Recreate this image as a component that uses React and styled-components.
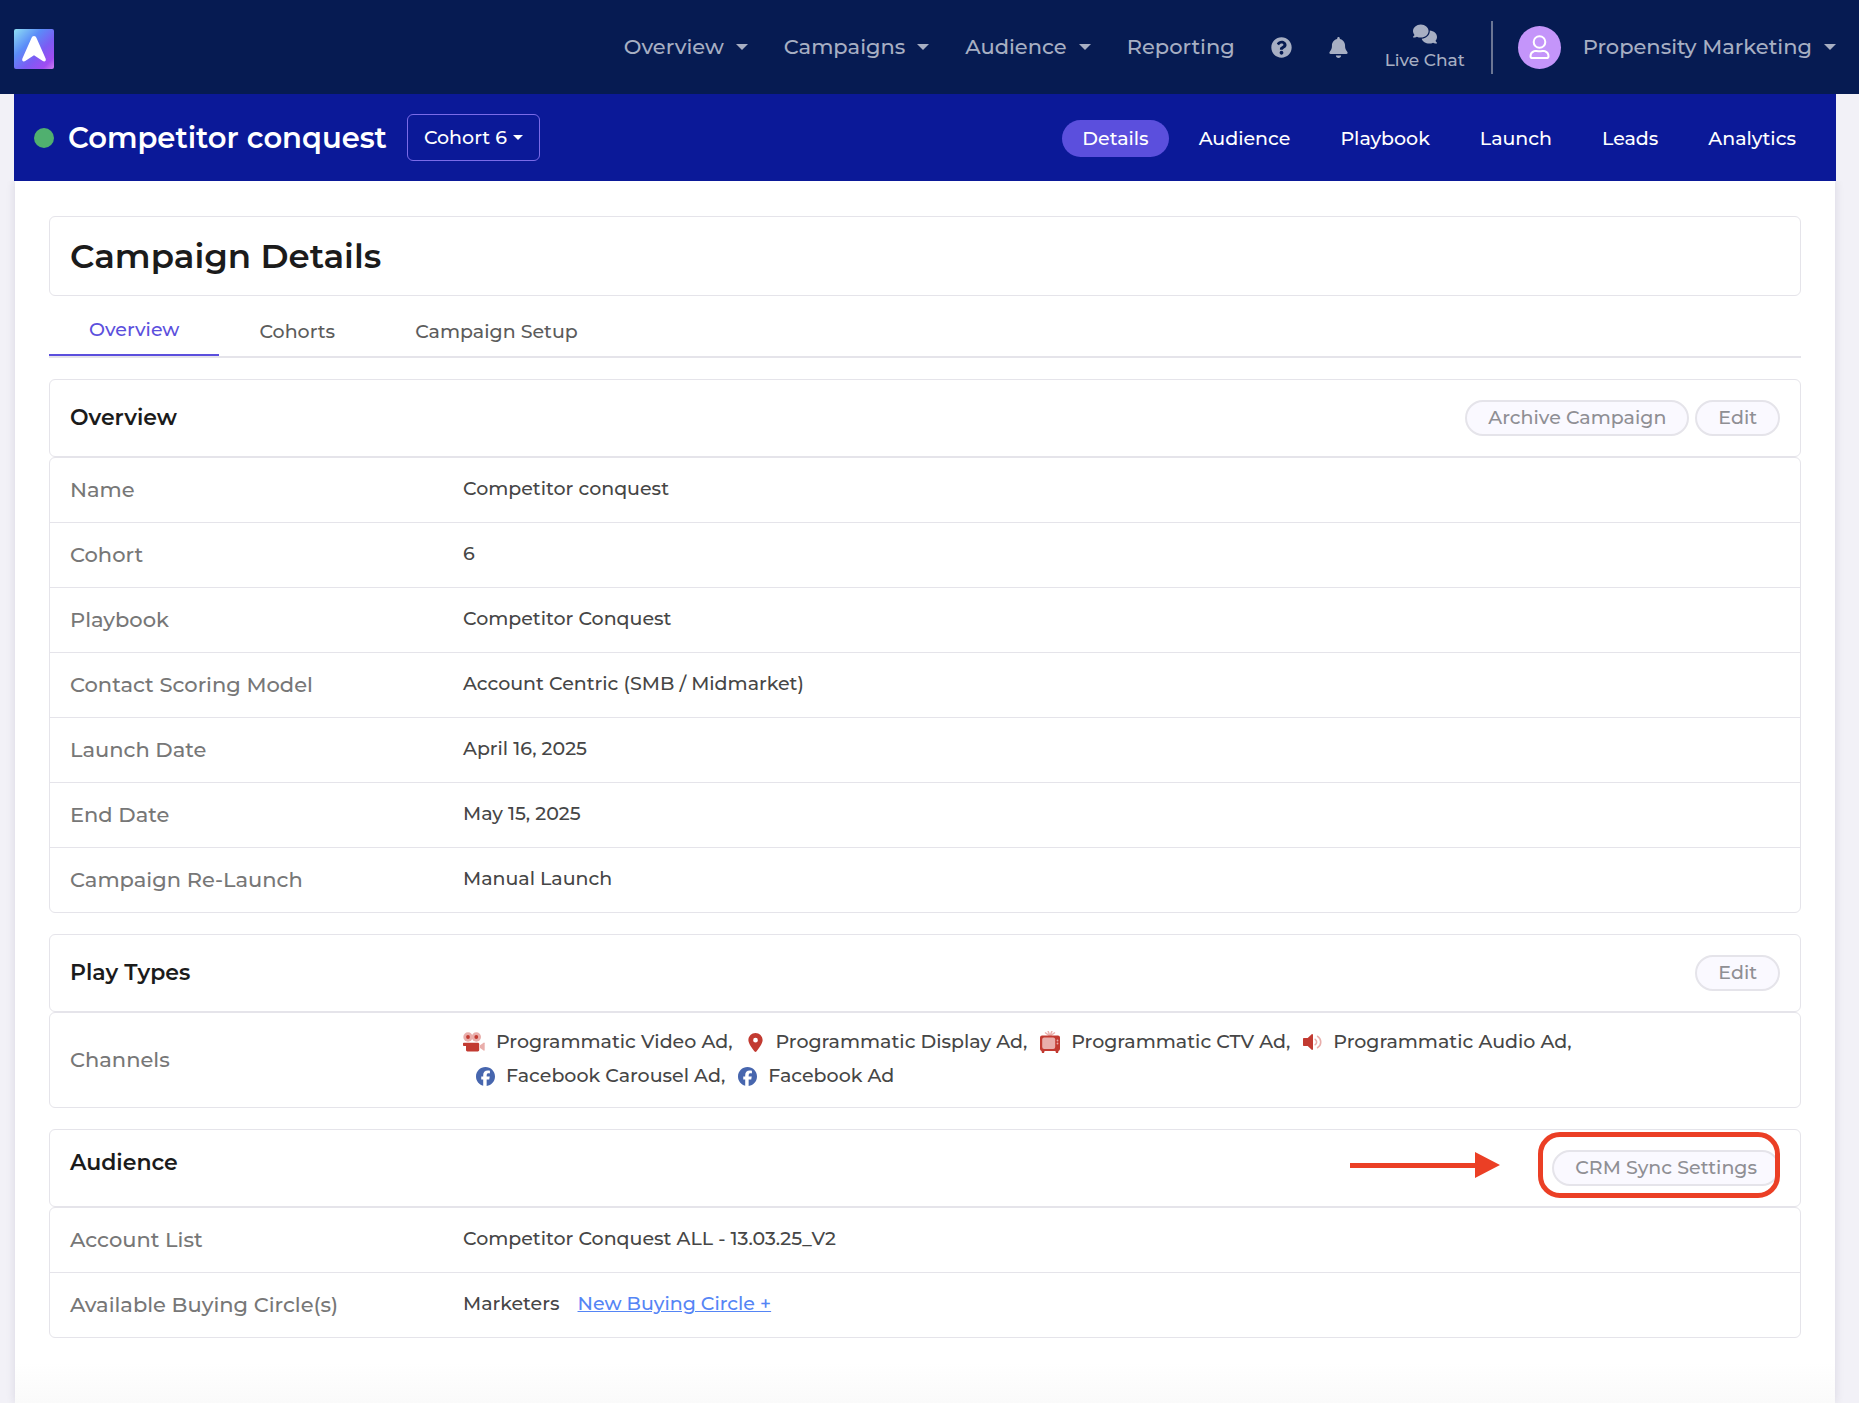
import React from "react";
import styled, { createGlobalStyle } from "styled-components";
import { FaQuestionCircle } from "react-icons/fa";
import { FaBell, FaComments, FaFacebook, FaLocationDot } from "react-icons/fa6";

const overviewRows = [
  { label: "Name", value: "Competitor conquest" },
  { label: "Cohort", value: "6" },
  { label: "Playbook", value: "Competitor Conquest" },
  { label: "Contact Scoring Model", value: "Account Centric (SMB / Midmarket)" },
  { label: "Launch Date", value: "April 16, 2025" },
  { label: "End Date", value: "May 15, 2025" },
  { label: "Campaign Re-Launch", value: "Manual Launch" },
];

const campaignLinks = [
  "Details",
  "Audience",
  "Playbook",
  "Launch",
  "Leads",
  "Analytics",
];

const tabs = ["Overview", "Cohorts", "Campaign Setup"];

const Logo = () => (
  <svg width="40" height="40" viewBox="0 0 40 40" role="img" aria-label="Home">
    <defs>
      <linearGradient id="logo" x1="0" y1="0" x2="1" y2="1">
        <stop offset="0" stopColor="#8fe0f4" />
        <stop offset="0.35" stopColor="#5b8cf8" />
        <stop offset="0.62" stopColor="#7c5cf3" />
        <stop offset="0.85" stopColor="#a04cf2" />
        <stop offset="1" stopColor="#cf7ff0" />
      </linearGradient>
    </defs>
    <rect width="40" height="40" rx="2" fill="url(#logo)" />
    <path
      d="M20 7c1.300 0 2 .8 2.500 2l9.100 20.500c.9 2.200-.9 3.900-2.800 2.600L20 26.200l-8.800 5.900c-1.900 1.300-3.700-.4-2.800-2.600L17.500 9c.5-1.200 1.200-2 2.500-2z"
      fill="#fff"
    />
  </svg>
);

const PersonIcon = () => (
  <svg width="21" height="25" viewBox="0 0 21 25" fill="none" aria-hidden="true">
    <g stroke="#fff" strokeWidth="2">
      <circle cx="10.500" cy="7" r="5.800" />
      <path d="M5 16.200c1.500-.8 2.300 0 5.500 0s4-.8 5.500 0c2.300.9 3.500 2.700 3.500 5 0 1-.7 1.800-1.700 1.800H3.200c-1 0-1.700-.8-1.700-1.800 0-2.300 1.200-4.100 3.500-5z" />
    </g>
  </svg>
);

const VideoIcon = () => (
  <svg width="22" height="20" viewBox="0 0 22 20" aria-hidden="true">
    <g fill="#e9aeab">
      <circle cx="5" cy="5" r="4.700" />
      <circle cx="13.300" cy="5" r="4.700" />
      <path d="M17 13.200l3.600-2.500c.6-.4 1.100-.1 1.100.5v6.800c0 .6-.5.900-1.100.5L17 16z" />
    </g>
    <g fill="#c23a31">
      <circle cx="5" cy="5" r="1.900" />
      <circle cx="13.300" cy="5" r="1.900" />
      <path d="M.8 10.700h14c.8 0 1.400.6 1.400 1.400v5.900c0 .8-.6 1.400-1.400 1.400H4.400c-.8 0-1.400-.6-1.400-1.400v-4H.8c-.5 0-.8-.3-.8-.8v-1.700c0-.5.3-.8.8-.8z" />
    </g>
  </svg>
);

const TvIcon = () => (
  <svg width="20" height="22" viewBox="0 0 20 22" aria-hidden="true">
    <path
      d="M5 1.500l5 3.500 5-3.500M8 0l2 5 2-5"
      stroke="#e9aeab"
      strokeWidth="1.500"
      fill="none"
    />
    <path
      d="M2 4.500h16a2 2 0 0 1 2 2V18a2 2 0 0 1-1.500 1.900L18 22h-2l-.6-2H4.600L4 22H2l-.5-2.100A2 2 0 0 1 0 18V6.500a2 2 0 0 1 2-2z"
      fill="#c23a31"
    />
    <rect x="2.200" y="6.500" width="13" height="11.500" rx="2" fill="#e9aeab" />
    <circle cx="17.500" cy="9.500" r="0.900" fill="#e9aeab" />
    <circle cx="17.500" cy="12.500" r="0.900" fill="#e9aeab" />
  </svg>
);

const AudioIcon = () => (
  <svg width="19" height="20" viewBox="0 0 19 20" aria-hidden="true">
    <path
      d="M10 3v14c0 .8-.8 1.100-1.300.7L4.700 14H1c-.6 0-1-.4-1-1V7c0-.6.4-1 1-1h3.700l4-3.700c.5-.4 1.300-.1 1.300.7z"
      fill="#c23a31"
    />
    <path
      d="M12.200 7.300c1.900 1.300 1.900 4.100 0 5.400M14.600 4.300c4.200 2.700 4.200 8.700 0 11.400"
      stroke="#e9aeab"
      strokeWidth="1.600"
      strokeLinecap="round"
      fill="none"
    />
  </svg>
);

const Arrow = () => (
  <ArrowSvg viewBox="0 0 150 26" aria-hidden="true">
    <path d="M0 11h125V0l25 13-25 13V16H0z" fill="#eb3f25" />
  </ArrowSvg>
);

const channels = [
  { label: "Programmatic Video Ad", icon: <VideoIcon /> },
  {
    label: "Programmatic Display Ad",
    icon: <FaLocationDot width={15} height={20} color="#c23a31" />,
  },
  { label: "Programmatic CTV Ad", icon: <TvIcon /> },
  { label: "Programmatic Audio Ad", icon: <AudioIcon /> },
  { label: "Facebook Carousel Ad", icon: <FaFacebook size={19} color="#4766ae" /> },
  { label: "Facebook Ad", icon: <FaFacebook size={19} color="#4766ae" /> },
];

const Rows = ({ items }) => (
  <RowList>
    {items.map(({ label, value }) => (
      <Row key={label}>
        <dt>{label}</dt>
        <dd>{value}</dd>
      </Row>
    ))}
  </RowList>
);

export default function App() {
  return (
    <>
      <GlobalStyle />
      <TopBar>
        <LogoLink href="#home">
          <Logo />
        </LogoLink>
        <MainNav>
          {["Overview", "Campaigns", "Audience"].map((label) => (
            <NavButton key={label} type="button">
              {label}
              <Caret />
            </NavButton>
          ))}
          <NavLink href="#reporting">Reporting</NavLink>
          <NavLink href="#help" aria-label="Help">
            <FaQuestionCircle size={21} />
          </NavLink>
          <NavLink href="#notifications" aria-label="Notifications">
            <FaBell size={21} />
          </NavLink>
          <ChatLink href="#chat">
            <FaComments size={24} />
            Live Chat
          </ChatLink>
        </MainNav>
        <Account type="button">
          <Avatar>
            <PersonIcon />
          </Avatar>
          <AccountName>
            Propensity Marketing
            <Caret />
          </AccountName>
        </Account>
      </TopBar>
      <Page>
        <CampaignBar>
          <StatusDot />
          <CampaignName>Competitor conquest</CampaignName>
          <CohortButton type="button">
            Cohort 6
            <Caret $small />
          </CohortButton>
          <CampaignNav>
            {campaignLinks.map((label) => (
              <CampaignLink
                key={label}
                href={`#${label.toLowerCase()}`}
                $active={label === "Details"}
              >
                {label}
              </CampaignLink>
            ))}
          </CampaignNav>
        </CampaignBar>
        <Content>
          <TitleBox>
            <h1>Campaign Details</h1>
          </TitleBox>
          <Tabs role="tablist">
            {tabs.map((label, i) => (
              <Tab key={label} type="button" role="tab" aria-selected={i === 0}>
                {label}
              </Tab>
            ))}
          </Tabs>

          <Section>
            <SectionHeader>
              <h2>Overview</h2>
              <Actions>
                <PillButton type="button">Archive Campaign</PillButton>
                <PillButton type="button">Edit</PillButton>
              </Actions>
            </SectionHeader>
            <Rows items={overviewRows} />
          </Section>

          <Section>
            <SectionHeader>
              <h2>Play Types</h2>
              <Actions>
                <PillButton type="button">Edit</PillButton>
              </Actions>
            </SectionHeader>
            <Rows
              items={[
                {
                  label: "Channels",
                  value: (
                    <Channels>
                      {channels.map(({ label, icon }, i) => (
                        <Channel key={label}>
                          {icon}
                          {label}
                          {i < channels.length - 1 && ","}
                        </Channel>
                      ))}
                    </Channels>
                  ),
                },
              ]}
            />
          </Section>

          <Section>
            <SectionHeader $top>
              <h2>Audience</h2>
              <Actions>
                <PillButton type="button">CRM Sync Settings</PillButton>
                <Highlight />
                <Arrow />
              </Actions>
            </SectionHeader>
            <Rows
              items={[
                {
                  label: "Account List",
                  value: "Competitor Conquest ALL - 13.03.25_V2",
                },
                {
                  label: "Available Buying Circle(s)",
                  value: (
                    <>
                      Marketers
                      <TextLink href="#new-buying-circle">New Buying Circle +</TextLink>
                    </>
                  ),
                },
              ]}
            />
          </Section>
        </Content>
      </Page>
    </>
  );
}

const line = "#e5e4ea";

const GlobalStyle = createGlobalStyle`
  *, *::before, *::after {
    box-sizing: border-box;
  }
  body {
    margin: 0;
    background: #f2f1f7;
    color: #464646;
    font-family: Montserrat, Inter, sans-serif;
    font-size: 19px;
    font-weight: 500;
    line-height: 24px;
  }
  #root {
    display: flex;
    flex-direction: column;
    min-height: 100vh;
  }
  button {
    padding: 0;
    border: 0;
    background: none;
    color: inherit;
    font: inherit;
    cursor: pointer;
  }
  a {
    color: inherit;
    text-decoration: none;
  }
  h1, h2, dl, dd {
    margin: 0;
  }
  svg {
    flex-shrink: 0;
  }
`;

const TopBar = styled.header`
  display: flex;
  align-items: center;
  height: 94px;
  padding: 0 23px 0 14px;
  background: #061b52;
  color: #a7afc3;
  font-size: 21px;
`;

const LogoLink = styled.a`
  display: flex;
  margin-top: 4px;
`;

const MainNav = styled.nav`
  display: flex;
  align-items: center;
  gap: 36px;
  margin-left: auto;
`;

const NavButton = styled.button`
  display: flex;
  align-items: center;
  gap: 12px;
`;

const NavLink = styled.a`
  display: flex;
`;

const ChatLink = styled.a`
  display: flex;
  flex-direction: column;
  align-items: center;
  gap: 2px;
  font-size: 17px;
`;

const Caret = styled.span`
  border-top: ${({ $small }) => ($small ? 5 : 6)}px solid;
  border-left: ${({ $small }) => ($small ? 5 : 6)}px solid transparent;
  border-right: ${({ $small }) => ($small ? 5 : 6)}px solid transparent;
`;

const Account = styled.button`
  display: flex;
  align-items: center;
  gap: 22px;
  height: 53px;
  margin-left: 26px;
  padding-left: 25px;
  border-left: 2px solid #6b7694;
`;

const Avatar = styled.span`
  display: flex;
  align-items: center;
  justify-content: center;
  width: 43px;
  height: 43px;
  border-radius: 50%;
  background: #c495fa;
`;

const AccountName = styled.span`
  display: flex;
  align-items: center;
  gap: 12px;
`;

const Page = styled.main`
  display: flex;
  flex: 1;
  flex-direction: column;
  margin: 0 23px 0 14px;
`;

const CampaignBar = styled.div`
  display: flex;
  align-items: center;
  height: 87px;
  padding: 0 20px;
  background: #0b1998;
  color: #fff;
`;

const StatusDot = styled.span`
  width: 20px;
  height: 20px;
  border-radius: 50%;
  background: #50b06f;
`;

const CampaignName = styled.span`
  margin: 0 20px 0 14px;
  font-size: 29px;
  font-weight: 600;
  line-height: 40px;
`;

const CohortButton = styled.button`
  display: flex;
  align-items: center;
  gap: 6px;
  height: 47px;
  padding: 0 16px;
  border: 1px solid #7b6be8;
  border-radius: 6px;
`;

const CampaignNav = styled.nav`
  display: flex;
  gap: 10px;
  margin: 2px 0 0 auto;
`;

const CampaignLink = styled.a`
  padding: 7px 20px 6px;
  border-radius: 19px;
  background: ${({ $active }) => ($active ? "#5b4fdd" : "none")};
`;

const Content = styled.div`
  flex: 1;
  margin: 0 1px;
  padding: 35px 34px;
  background: linear-gradient(to top, #fafafa, #fff 40px);
  box-shadow: 0 0 9px rgba(40, 35, 70, 0.12);
  clip-path: inset(0 -12px);
`;

const Box = styled.div`
  border: 1px solid ${line};
  border-radius: 6px;
`;

const TitleBox = styled(Box)`
  padding: 19px 20px;
  color: #1b1b1b;
  h1 {
    font-size: 34px;
    font-weight: 600;
    line-height: 40px;
  }
`;

const Tabs = styled.div`
  display: flex;
  align-items: flex-end;
  height: 62px;
  border-bottom: 2px solid ${line};
`;

const Tab = styled.button`
  padding: 12px 40px;
  color: #5c5c5c;
  &[aria-selected="true"] {
    border-bottom: 2px solid #5b4fdd;
    color: #5b4fdd;
  }
`;

const Section = styled.section`
  margin-top: 21px;
`;

const SectionHeader = styled(Box)`
  display: flex;
  align-items: ${({ $top }) => ($top ? "flex-start" : "center")};
  justify-content: space-between;
  padding: 20px;
  h2 {
    color: #1b1b1b;
    font-size: 22px;
    font-weight: 600;
    line-height: 26px;
  }
`;

const Actions = styled.div`
  position: relative;
  display: flex;
  gap: 6px;
`;

const PillButton = styled.button`
  height: 36px;
  padding: 0 21px;
  border: 2px solid ${line};
  border-radius: 18px;
  background: #faf9ff;
  color: #8f8f94;
`;

const Highlight = styled.span`
  position: absolute;
  inset: -18px 0 -12px -14px;
  border: 5px solid #eb3f25;
  border-radius: 22px;
  pointer-events: none;
`;

const ArrowSvg = styled.svg`
  position: absolute;
  top: 2px;
  right: 280px;
  width: 150px;
  height: 26px;
`;

const Row = styled.div`
  display: flex;
  align-items: center;
  min-height: 64px;
  padding: 12px 20px;
  dt {
    width: 393px;
    color: #777;
    font-size: 21px;
  }
  dd {
    flex: 1;
    padding-bottom: 2px;
  }
`;

const RowList = styled(Box).attrs({ as: "dl" })`
  ${Row} + ${Row} {
    min-height: 65px;
    border-top: 1px solid ${line};
  }
`;

const Channels = styled.div`
  display: flex;
  flex-wrap: wrap;
`;

const Channel = styled.span`
  display: flex;
  align-items: center;
  gap: 11px;
  margin-left: 13px;
  line-height: 34px;
  &:first-child {
    margin-left: 0;
  }
`;

const TextLink = styled.a`
  margin-left: 18px;
  color: #5585f5;
  text-decoration: underline;
`;
